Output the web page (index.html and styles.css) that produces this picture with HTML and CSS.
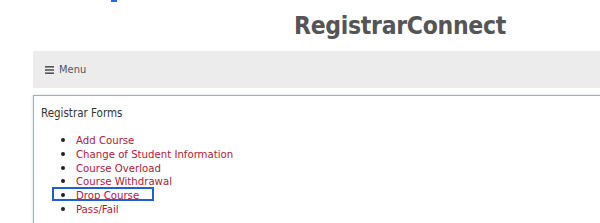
FILE: index.html
```html
<!DOCTYPE html>
<html lang="en">
<head>
    <meta charset="UTF-8">
    <meta name="viewport" content="width=device-width, initial-scale=1.0">
    <title>RegistrarConnect</title>
    <link rel="stylesheet" href="styles.css">
</head>
<body>
    <!-- focused skip link peeking at the top edge -->
    <span class="focus-mark"></span>

    <div class="page">
        <header class="site-head">
            <h1 class="site-title">RegistrarConnect</h1>
        </header>

        <nav class="menu-bar">
            <span class="menu-toggle">
                <svg class="menu-icon" width="9" height="8" viewBox="0 0 9 8">
                    <rect x="0" y="0" width="9" height="1.6" fill="#555"/>
                    <rect x="0" y="3.2" width="9" height="1.6" fill="#555"/>
                    <rect x="0" y="6.4" width="9" height="1.6" fill="#555"/>
                </svg>
                Menu
            </span>
        </nav>

        <div class="panel" id="forms">
            <p class="panel-title">Registrar Forms</p>
            <ul class="form-list">
                <li><a href="#">Add Course</a></li>
                <li><a href="#">Change of Student Information</a></li>
                <li><a href="#">Course Overload</a></li>
                <li><a href="#">Course Withdrawal</a></li>
                <li class="focused"><a href="#">Drop Course</a></li>
                <li><a href="#">Pass/Fail</a></li>
            </ul>
        </div>
    </div>
</body>
</html>
```

FILE: styles.css
```css
html, body {
    margin: 0;
    padding: 0;
    overflow: hidden;
    background: #ffffff;
}

body {
    font-family: "DejaVu Sans Condensed", "DejaVu Sans", sans-serif;
    font-size: 11px;
    color: #333333;
    width: 600px;
    height: 223px;
    position: relative;
}

.focus-mark {
    position: absolute;
    left: 111px;
    top: 0;
    width: 6px;
    height: 2px;
    background: #2a66e0;
}

.page {
    margin-left: 33px;
    width: 734px;
}

.site-head {
    height: 51px;
    display: flex;
    justify-content: center;
}

.site-title {
    margin: 0;
    padding-top: 11px;
    font-size: 24.5px;
    font-weight: bold;
    color: #555555;
    letter-spacing: -0.3px;
}

.menu-bar {
    height: 37px;
    background-color: #ececec;
    display: flex;
    align-items: center;
    padding-left: 12px;
}

.menu-toggle {
    display: flex;
    align-items: center;
    gap: 5px;
    color: #555555;
    font-size: 11px;
}

.panel {
    margin-top: 7px;
    border-top: 1px solid #a4acb8;
    border-left: 1px solid #a4acb8;
    box-shadow: 0 0 3px rgba(0, 0, 0, 0.15);
    padding: 10px 7px 20px;
    min-height: 200px;
}

.panel-title {
    margin: 0 0 13px;
    line-height: 14px;
    font-size: 11.5px;
}

.form-list {
    margin: 0;
    padding-left: 35px;
    line-height: 13.7px;
    font-size: 11.3px;
}

.form-list li {
    height: 13.8px;
}

.form-list li::marker {
    font-size: 13px;
    color: #222222;
}

.form-list a {
    color: #b3193b;
    text-decoration: none;
}

.form-list li.focused {
    position: relative;
}

.form-list li.focused::after {
    content: "";
    position: absolute;
    left: -24px;
    top: -1px;
    width: 98px;
    height: 10px;
    border: 2px solid #1f5fd6;
}
```
